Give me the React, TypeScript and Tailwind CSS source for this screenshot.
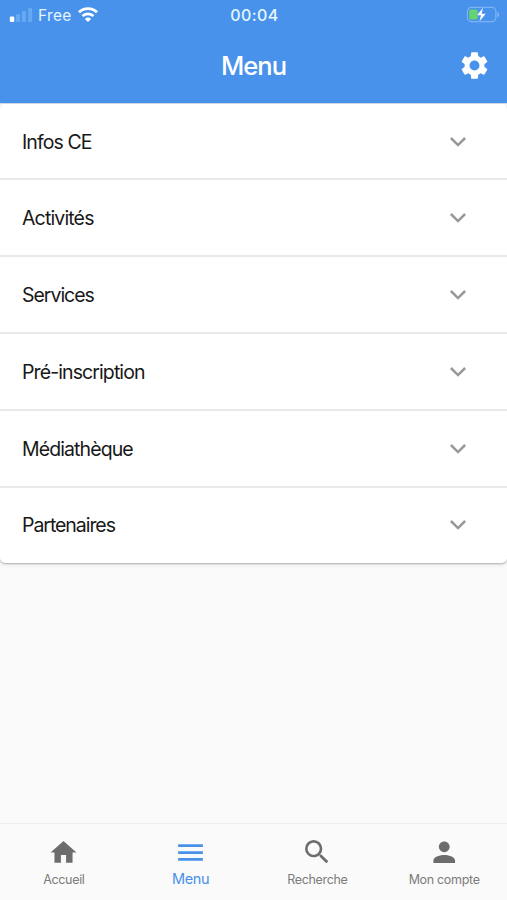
import React from "react";
import { MdHome, MdMenu, MdPerson, MdSearch, MdSettings } from "react-icons/md";

const sections = [
  { label: "Infos CE", style: "tracking-[-0.9px]" },
  { label: "Activités", style: "tracking-[-0.85px]" },
  { label: "Services", style: "tracking-[-1.02px]" },
  { label: "Pré-inscription", style: "tracking-[-0.9px]" },
  { label: "Médiathèque", style: "tracking-[-0.9px]" },
  { label: "Partenaires", style: "tracking-[-1.05px]" },
];

const tabs = [
  { label: "Accueil", Icon: MdHome, size: 31 },
  { label: "Menu", Icon: MdMenu, size: 33, active: true },
  { label: "Recherche", Icon: MdSearch, size: 32 },
  { label: "Mon compte", Icon: MdPerson, size: 32.5 },
];

function Signal() {
  return (
    <svg width="24" height="16" viewBox="0 0 24 16" className="shrink-0">
      <rect x="0.8" y="9.5" width="4.5" height="5.5" rx="1.3" fill="#fff" />
      <rect x="7" y="7" width="4" height="8" rx="1" fill="#65a9f3" />
      <rect x="13" y="4" width="4" height="11" rx="1" fill="#65a9f3" />
      <rect x="19.2" y="1" width="4" height="14" rx="1" fill="#65a9f3" />
    </svg>
  );
}

function Wifi() {
  return (
    <svg width="20" height="16" viewBox="0 0 20 16" fill="none" stroke="#fff" className="shrink-0">
      <path d="M1 5.2a13 13 0 0 1 18 0" strokeWidth="2.9" />
      <path d="M4.500 9.100a8 8 0 0 1 11 0" strokeWidth="2.700" />
      <path d="M10 15 6.900 12a4.500 4.500 0 0 1 6.200 0Z" fill="#fff" stroke="none" />
    </svg>
  );
}

function Battery() {
  return (
    <svg width="34" height="18" viewBox="0 0 34 18" className="shrink-0">
      <rect x="1.400" y="1.400" width="28.500" height="14.200" rx="4" fill="none" stroke="#7db4f6" strokeWidth="1.200" />
      <path d="M31.500 6v5.500c2-.7 2-4.800 0-5.500Z" fill="#88bbf8" />
      <rect x="3.200" y="3.400" width="8.500" height="10.200" rx="1.800" fill="#65d36e" />
      <path d="M17 1.800 11 9.300h4l-1.600 6.200 6.300-7.800h-4.100Z" fill="#fff" stroke="#4992eb" strokeWidth="1" paintOrder="stroke" />
    </svg>
  );
}

export default function App() {
  return (
    <div className="flex h-[900px] w-[507px] flex-col overflow-hidden bg-[#fafafa] font-['Inter','Liberation_Sans',sans-serif]">
      <header className="h-[103px] shrink-0 bg-[#4892eb] text-white">
        <div className="grid h-[30px] grid-cols-3 items-center pr-[7px] pl-[9px]">
          <div className="flex items-center">
            <Signal />
            <span className="ml-[5px] w-[36px] pt-px text-[15.500px] leading-[20px] tracking-[0.350px] whitespace-nowrap text-[#e5f4ff]">Free</span>
            <span className="ml-[4px]"><Wifi /></span>
          </div>
          <div className="text-center text-[16px] leading-[20px] font-medium tracking-[0.400px] text-[#e5f8ff]">00:04</div>
          <div className="flex justify-end"><Battery /></div>
        </div>
        <div className="grid h-[71px] grid-cols-[1fr_auto_1fr] items-center px-[16px]">
          <span />
          <h1 className="text-[25.500px] leading-8 font-medium tracking-[-0.950px]">Menu</h1>
          <button className="justify-self-end" aria-label="Paramètres">
            <MdSettings size={33} />
          </button>
        </div>
      </header>

      <main className="flex-1 border-t border-[#d3dbe5]">
        <ul className="h-[459px] rounded-[5px] bg-white shadow-[0_1px_2px_rgba(0,0,0,0.28),0_2px_5px_rgba(0,0,0,0.06)]">
          {sections.map(({ label, style }) => (
            <li key={label} className="flex h-[76.800px] items-center justify-between border-b-2 border-[#e9e9e9] pt-px pr-[40px] pl-[22px] first:h-[76.400px] last:border-transparent">
              <span className={`text-[19.500px] leading-6 text-[#181818] ${style}`}>{label}</span>
              <svg width="18" height="12" viewBox="0 0 18 12" fill="none" stroke="#989898" strokeWidth="2.500">
                <path d="m1.900 2 7.100 7.100L16.100 2" />
              </svg>
            </li>
          ))}
        </ul>
      </main>

      <nav className="grid h-[77px] shrink-0 grid-cols-4 border-t border-[#ededed]">
        {tabs.map(({ label, Icon, size, active }) => (
          <div key={label} className={`flex flex-col items-center pt-[13px] pl-px ${active ? "text-[#4892eb]" : "text-[#6c6c6c]"}`}>
            <div className="-mt-px mb-px flex h-8 items-center">
              <Icon size={size} />
            </div>
            <span className={active ? "text-[14.500px] leading-5 tracking-[-0.300px]" : "mt-px text-[12.500px] leading-5 tracking-[-0.320px] text-[#7c7c7c]"}>{label}</span>
          </div>
        ))}
      </nav>
    </div>
  );
}
